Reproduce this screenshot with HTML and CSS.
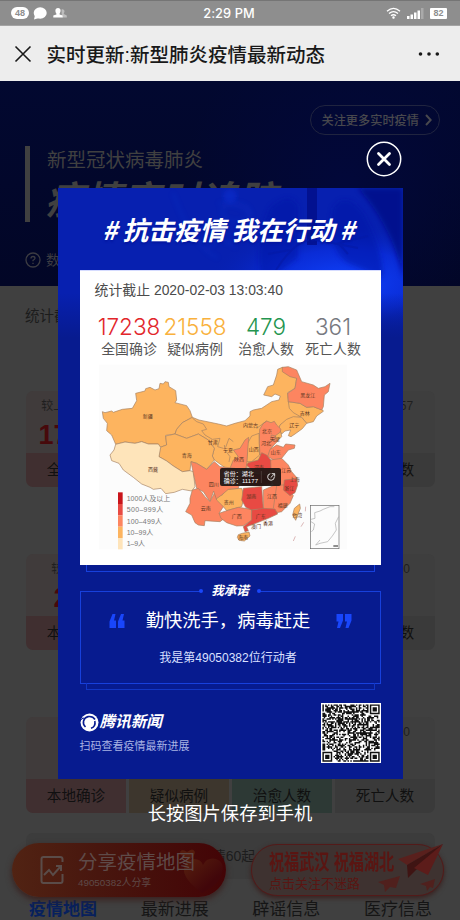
FILE: index.html
```html
<!DOCTYPE html>
<html lang="zh-CN">
<head>
<meta charset="utf-8">
<title>实时更新:新型肺炎疫情最新动态</title>
<link rel="stylesheet" href="styles.css">
</head>
<body>
<div class="phone">
  <div class="status">
    <div class="status-left">
      <span class="pill">48</span>
      <svg width="14" height="13" viewBox="0 0 14 13"><ellipse cx="7.2" cy="6" rx="6.5" ry="5.8" fill="#fff"/><path d="M2 8L1 12.5L6 11z" fill="#fff"/></svg>
      <svg class="people" width="14" height="10" viewBox="0 0 14 10"><path d="M8.500 1.500a2 2 0 0 1 3 1.500c0 1.500-.7 2-.7 3l3 1.500V9.500h-5z" fill="#bdbdbd"/><path d="M5 0c1.700 0 2.600 1.100 2.600 2.600S7 5 6.600 5.600v.8l3 1.200V9.500H.3V7.600l3.100-1.200v-.8C2.800 5 2.400 4 2.400 2.600S3.400 0 5 0z" fill="#fff"/></svg>
    </div>
    <span class="clock">2:29 PM</span>
    <div class="status-right">
      <svg width="15" height="12" viewBox="0 0 15 12" fill="none" stroke="#fff" stroke-width="1.300"><path d="M1 4.200Q7.500-1.500 14 4.200M3 6.600Q7.500 2.600 12 6.600M5 8.800Q7.500 6.600 10 8.800"/><circle cx="7.500" cy="10.600" r=".6" fill="#fff"/></svg>
      <svg width="17" height="11" viewBox="0 0 17 11" fill="#fff"><path d="M0 8h2.500v3H0zM3.500 6.500H6V11H3.500zM7 4.500h2.500V11H7zM10.500 2.500H13V11h-2.500z"/><path d="M14 0h2.500v11H14z" opacity=".25"/></svg>
      <span class="battery">82</span>
    </div>
  </div>
  <div class="nav">
    <svg width="18" height="18" viewBox="0 0 18 18" stroke="#191919" stroke-width="1.600" fill="none"><path d="M1.500 1.500l15 15M16.500 1.500l-15 15"/></svg>
    <span class="nav-title">实时更新:新型肺炎疫情最新动态</span>
    <svg class="dots" width="22" height="4" viewBox="0 0 22 4"><circle cx="2.500" cy="2" r="1.800"/><circle cx="11" cy="2" r="1.800"/><circle cx="19.300" cy="2" r="1.800"/></svg>
  </div>

  <div class="hero">
    <div class="follow">关注更多实时疫情
      <svg width="7" height="12" viewBox="0 0 7 12" fill="none" stroke="#48484d" stroke-width="2"><path d="M1 1l4.700 5L1 11"/></svg>
    </div>
    <div class="headline">
      <p class="sub">新型冠状病毒肺炎</p>
      <p class="main">疫情实时追踪</p>
    </div>
    <div class="source">
      <svg width="16" height="16" viewBox="0 0 16 16" fill="none" stroke="#3c3c42" stroke-width="1.300"><circle cx="8" cy="8" r="7"/><path d="M6 6.500q0-2 2-2t2 1.800q0 1-2 2v1M8 10.800v1.200"/></svg>
      <span>数据</span>
    </div>
  </div>

  <div class="content">
    <p class="asof">统计截止</p>
    <div class="stats">
      <div class="cell c1"><div class="fig"><small class="wide">较上日+2726</small><b>17238</b></div><span>全国确诊</span></div>
      <div class="cell c2"><div class="fig"></div><span></span></div>
      <div class="cell c3"><div class="fig"></div><span></span></div>
      <div class="cell c4"><div class="fig"><small>较上日+57</small></div><span>死亡人数</span></div>
    </div>
    <div class="stats">
      <div class="cell c1"><div class="fig"><small>较上日+0</small><b>212</b></div><span>本地确诊</span></div>
      <div class="cell c2"><div class="fig"></div><span></span></div>
      <div class="cell c3"><div class="fig"></div><span></span></div>
      <div class="cell c4"><div class="fig"><small>较上日+0</small></div><span>死亡人数</span></div>
    </div>
    <div class="stats">
      <div class="cell c1"><div class="fig"><small>较上日</small></div><span>本地确诊</span></div>
      <div class="cell c2"><div class="fig"></div><span>疑似病例</span></div>
      <div class="cell c3"><div class="fig"></div><span>治愈人数</span></div>
      <div class="cell c4"><div class="fig"><small>较上日+0</small></div><span>死亡人数</span></div>
    </div>
    <div class="notice">情60起</div>
    <div class="tabs"><span class="on">疫情地图</span><span>最新进展</span><span>辟谣信息</span><span>医疗信息</span></div>
  </div>

  <div class="share">
    <svg class="heart" width="52" height="48" viewBox="0 0 52 48"><defs><linearGradient id="hg" x1="0" y1="0" x2="1" y2="1"><stop offset="0" stop-color="#57200e"/><stop offset=".7" stop-color="#41060a"/></linearGradient></defs><path d="M24 47Q5 33 6 23Q7 13 16 13Q23 13 25 19Q29 11 38 13Q47 16 44 27Q42 38 24 47z" fill="url(#hg)"/><path d="M10 15Q2 10 2 6Q4 2 9 6Q15 1 17 6Q17 10 10 15z" fill="#551c0e"/></svg>
    <svg class="chart" width="24" height="28" viewBox="0 0 24 28" fill="none" stroke="#5a4c49" stroke-width="2"><path d="M22.500 6V3Q22.500 1 20 1H3.500Q1.500 1 1.500 3V25Q1.500 27 3.500 27H20.500Q22.500 27 22.500 25V18"/><path d="M4 19l5-5 4 5 8-9M16 10h5v5"/></svg>
    <div class="share-text"><span>分享疫情地图</span><small>49050382人分享</small></div>
  </div>
  <div class="bless">
    <div class="bless-text"><strong>祝福武汉 祝福湖北</strong><span>点击关注不迷路</span></div>
    <svg class="planes" width="66" height="52" viewBox="0 0 66 52"><path d="M65 0L20 15l9 6z" fill="#59201d"/><path d="M65 0L29 21l1 13 8-8z" fill="#3f1413"/><path d="M65 0L36 24l14 7z" fill="#5c1c1a"/><path d="M22 32L0 38l6 3 1 7 5-5 6 1zM57 35L42 40l6 2 1 5 3-4 3 1z" fill="#50201d"/></svg>
  </div>

  <svg class="close" width="36" height="36" viewBox="0 0 36 36" fill="none" stroke="#fff"><circle cx="18" cy="18" r="16.700" stroke-width="1.500"/><path d="M12.500 12.500l11 11M23.500 12.500l-11 11" stroke-width="2.800" stroke-linecap="round"/></svg>

  <div class="poster">
    <svg class="lungs" width="345" height="150" viewBox="0 0 345 150">
      <defs>
        <radialGradient id="glow" cx=".78" cy=".58" r=".4" gradientTransform="translate(.05 .05)"><stop offset="0" stop-color="#1044ff"/><stop offset=".55" stop-color="#0b31e6" stop-opacity=".7"/><stop offset="1" stop-color="#0620b0" stop-opacity="0"/></radialGradient>
        <filter id="soft"><feGaussianBlur stdDeviation="2.500"/></filter>
        <linearGradient id="fade" x1="0" y1="0" x2="0" y2="1"><stop offset="0.700" stop-color="#071b8f" stop-opacity="0"/><stop offset="1" stop-color="#071b8f"/></linearGradient>
      </defs>
      <rect width="345" height="150" fill="#0720b0"/>
      <rect width="345" height="150" fill="url(#glow)"/>
      <path d="M300 0H345V90Q335 40 300 0z" fill="#020a86" opacity=".8" filter="url(#soft)"/>
      <g filter="url(#soft)" fill="#0416a8" opacity=".55"><path d="M212 20Q232 2 240 18V70L205 95Q195 60 212 20zM275 20Q288 2 305 25Q325 60 325 90L290 75Q268 60 275 20z"/></g>
      <path d="M249 0h10v57h-10z" fill="#020c86" opacity=".75"/>
      <path d="M251 52Q235 55 218 82M257 52Q275 55 300 60M278 56L310 48M282 57L290 66M232 62L210 66" stroke="#0419a8" stroke-width="2" fill="none" opacity=".7"/>
      <g fill="none" stroke="#1740dc" stroke-width="1.500" opacity=".3" filter="url(#soft)"><path d="M115 5Q135 60 160 70M160 15q20 0 35 12M150 60q12-14 28 0"/><ellipse cx="178" cy="24" rx="14" ry="9"/></g>
      <circle cx="172" cy="8" r="7" fill="#0c35df" opacity=".4" filter="url(#soft)"/>
      <rect width="345" height="150" fill="url(#fade)"/>
    </svg>
    <h1><i>#</i>抗击疫情 我在行动<i>#</i></h1>
    <div class="report">
      <p class="time">统计截止 2020-02-03 13:03:40</p>
      <div class="totals">
        <div class="t1"><b>17238</b><span>全国确诊</span></div>
        <div class="t2"><b>21558</b><span>疑似病例</span></div>
        <div class="t3"><b>479</b><span>治愈人数</span></div>
        <div class="t4"><b>361</b><span>死亡人数</span></div>
      </div>
      <svg class="map" width="280" height="200" viewBox="0 0 840 600">
        <rect x="12" y="14" width="744" height="554" fill="#fcfcfc"/>
        <g stroke="#a58061" stroke-width="2" stroke-linejoin="round">
          <g fill="#fdb45f">
            <path d="M22 155L30 158 50 153 55 157 82 148 112 145 125 122 122 100 150 93 152 86 165 82 180 90 192 86 195 70 205 72 210 65 220 67 222 80 242 92 245 120 240 128 275 137 285 152 292 172 262 188 245 208 240 222 212 226 215 255 195 262 190 252 160 252 140 245 120 250 90 246 62 253 50 225 35 212 37 190 25 175z"/>
            <path d="M292 172L312 180 370 192 395 198 420 190 450 182 465 168 465 155 475 150 500 145 530 125 552 120 556 108 540 102 530 110 506 105 518 80 535 75 545 45 548 28 562 22 580 35 605 55 600 85 578 98 580 125 600 150 620 170 590 175 555 195 560 230 470 320 400 330 358 300 352 288 358 265 340 240 310 222 275 235 240 222 245 208 262 188z"/>
            <path d="M195 262L215 255 212 228 240 222 275 235 310 222 340 240 358 265 352 288 358 300 335 328 305 310 288 305 285 332 262 335 235 318 215 303 192 290z"/>
            <path d="M580 125L615 130 635 142 655 140 683 150 685 154 665 168 655 185 635 190 620 172 595 158 583 145z"/>
            <path d="M575 178L595 170 620 172 635 190 622 206 600 222 588 230 580 227 587 210 570 213 560 222 552 205 555 195z"/>
            <path d="M458 250L470 228 492 220 494 285 470 305 455 305 457 270z"/>
            <path d="M362 418L367 405 382 405 390 388 440 385 448 410 440 440 395 452 385 440 365 435z"/>
            <path d="M430 524L442 520 462 516 465 528 448 543 432 541 427 532zM614 432L616 445 602 481 593 465 598 445z"/>
          </g>
          <path fill="#fee4ba" d="M62 253L90 246 120 250 140 245 160 252 190 252 197 262 192 290 215 303 235 318 262 335 285 332 295 335 300 380 290 393 262 388 238 397 212 401 198 385 175 388 165 382 140 372 115 352 85 330 72 310 50 302 45 285 57 270z"/>
          <g fill="#fd8560">
            <path d="M562 22L580 20 605 30 620 65 655 75 670 85 690 80 705 70 700 95 688 105 685 140 680 150 655 140 635 142 615 130 580 125 578 100 600 85 605 55 585 50 562 35z"/>
            <path d="M494 208L505 190 515 183 528 188 538 184 545 195 558 208 555 217 540 228 548 243 530 262 518 290 495 285 493 250z"/>
            <path d="M450 240L461 232 455 315 450 335 405 325 415 300 430 290 415 270 435 265z"/>
            <path d="M518 290L525 268 545 255 565 262 572 252 600 255 598 265 580 270 560 295 540 302z"/>
            <path d="M525 300L560 295 580 315 590 335 607 355 580 362 570 378 540 378 515 345z"/>
            <path d="M505 390L540 375 572 375 585 395 595 407 585 430 560 455 545 458 505 450z"/>
            <path d="M288 305L305 310 335 328 358 305 375 320 420 325 440 345 430 385 400 388 380 405 362 418 356 393 345 425 325 395 305 385 295 340z"/>
            <path d="M292 390L310 385 330 410 345 425 358 400 365 420 385 440 372 460 395 470 375 485 330 482 328 497 310 495 300 488 290 465 272 455 285 430 285 415z"/>
            <path d="M372 460L395 452 430 442 470 448 472 480 445 497 425 498 395 488 378 475z"/>
          </g>
          <g fill="#e84a43">
            <path d="M460 308L490 300 500 278 515 285 527 300 528 325 515 350 475 335 455 315z"/>
            <path d="M438 335L520 345 530 372 500 378 440 376z" fill="#c9151b"/>
            <path d="M568 360L605 356 608 375 600 398 585 407 565 390z"/>
            <path d="M445 385L500 380 505 448 470 450 452 442 440 420z"/>
            <path d="M470 450L505 445 540 447 548 462 520 475 482 490 455 500 460 512 450 515 445 500 470 480z"/>
          </g>
          <path d="M388 255L390 270 405 290 402 306M392 262L402 235 415 245M292 174L305 185 325 192 335 208 320 212 330 225 352 238 375 235 368 260 385 265M545 378L540 410 535 445M529 225l12 3-2 15-12-3zM485 205L515 183" fill="none"/>
        </g>
        <g class="labels">
          <text x="143" y="175">新疆</text><text x="260" y="291">青海</text><text x="159" y="334">西藏</text><text x="338" y="252">甘肃</text><text x="384" y="275">宁夏</text><text x="341" y="377">四川</text><text x="317" y="451">云南</text><text x="386" y="431">贵州</text><text x="410" y="475">广西</text><text x="482" y="473">广东</text><text x="454" y="413">湖南</text><text x="516" y="413">江西</text><text x="548" y="441">福建</text><text x="568" y="391">浙江</text><text x="559" y="336">江苏</text><text x="584" y="363">上海</text><text x="476" y="327">河南</text><text x="417" y="302">陕西</text><text x="461" y="273">山西</text><text x="498" y="256">河北</text><text x="527" y="282">山东</text><text x="501" y="218">北京</text><text x="525" y="243">天津</text><text x="444" y="201">内蒙古</text><text x="583" y="200">辽宁</text><text x="614" y="165">吉林</text><text x="616" y="110">黑龙江</text><text x="468" y="505">澳门</text><text x="504" y="494">香港</text><text x="429" y="538">海南</text><text x="592" y="471">台湾</text>
        </g>
        <g fill="none" stroke="#dcb8b8" stroke-width="3"><path d="M595 543l6-14M618 500l8-13M631 454l1-14"/></g>
        <g fill="none" stroke="#666" stroke-width="2"><rect x="646" y="436" width="86" height="130"/><path d="M648 478L660 475 659 458 675 453 685 448 705 440 718 440M648 485L659 492 655 510 649 515M731 470L721 490 724 510 712 528 698 545 675 550 662 555 675 540" stroke="#aaa"/><path d="M715 558h14" stroke-width="5" stroke="#777"/></g>
        <rect x="375" y="324" width="183" height="54" rx="6" fill="#201715" opacity=".94"/>
        <path d="M499 333v36" stroke="#594c48" stroke-width="2"/>
        <g class="tip"><text x="386" y="348" textLength="90">省份：湖北</text><text x="386" y="369" textLength="103">确诊：11177</text></g>
        <path d="M526 341A10 10 0 1 0 538 351M527 353L538 342M530 341h9v9" fill="none" stroke="#fff" stroke-width="2.500"/>
        <path d="M69 397h14v35H69z" fill="#c9151b"/><path d="M69 432h14v34H69z" fill="#e84a43"/><path d="M69 466h14v34H69z" fill="#fd8560"/><path d="M69 500h14v34H69z" fill="#fdb45f"/><path d="M69 534h14v34H69z" fill="#fee4ba"/>
        <g class="legend"><text x="95" y="423" textLength="131">1000人及以上</text><text x="95" y="457" textLength="110">500–999人</text><text x="95" y="491" textLength="106">100–499人</text><text x="95" y="525" textLength="80">10–99人</text><text x="95" y="559" textLength="55">1–9人</text></g>
      </svg>
    </div>
    <div class="lip"></div>
    <div class="pledge">
      <div class="pledge-head"><span class="line left"></span><em>我承诺</em><span class="line right"></span></div>
      <div class="pledge-box">
        <div class="pledge-row">
          <svg width="16" height="14" viewBox="0 0 16 14" fill="#1946fb"><path d="M6.500 0L5 6.500H7V14H.5V7.500L3.500 0zM15 0L13.500 6.500H15.500V14H9V7.500L12 0z"/></svg>
          <span>勤快洗手，病毒赶走</span>
          <svg width="16" height="14" viewBox="0 0 16 14" fill="#1946fb"><path d="M.5 0H7V6.500L4 14H1L2.500 7.500H.5zM9 0H15.500V6.500L12.500 14H9.500L11 7.500H9z"/></svg>
        </div>
        <p>我是第49050382位行动者</p>
      </div>
    </div>
    <div class="lip low"></div>
    <div class="foot">
      <div>
        <div class="brand">
          <svg width="19" height="19" viewBox="0 0 19 19"><circle cx="9.500" cy="9.500" r="9" fill="#fff"/><path d="M5.500 14A6 6 0 0 1 8 3.600Q13 3 15 6.500M14.800 8Q16 13.500 11 15.300" fill="none" stroke="#071b8f" stroke-width="1.600"/><path d="M7 12.500Q6.500 6.500 10 6.500T13 12.500z" fill="#fff"/><path d="M0 8Q2 5 4 5" stroke="#071b8f" fill="none"/></svg>
          <em>腾讯新闻</em>
        </div>
        <p>扫码查看疫情最新进展</p>
      </div>
      <svg class="qr" id="qr" width="60" height="60" viewBox="-1 -1 43 43"></svg>
    </div>
  </div>
  <p class="hint">长按图片保存到手机</p>
</div>
<script src="script.js"></script>
</body>
</html>
```
FILE: styles.css
```css
* { box-sizing: border-box; }
body, p, h1 { margin: 0; }
body { background: #404040; font-family: "Liberation Sans", "Noto Sans CJK SC", sans-serif; }
svg { display: block; flex: none; }
.phone { position: relative; width: 460px; height: 920px; overflow: hidden; background: #404040; }

.status { height: 26px; background: #8e8e8e; display: grid; grid-template-columns: 1fr auto 1fr; align-items: center; padding: 0 13px 0 11px; color: #fff; border-bottom: 1px solid #a4a4a4; border-top: 1px solid #757575; }
.status-left, .status-right { display: flex; align-items: center; gap: 4px; }
.status-right { justify-content: flex-end; gap: 6px; }
.pill { width: 18px; height: 12px; border-radius: 6px; background: #fff; color: #8e8e8e; font: bold 9px/12px "Liberation Sans", sans-serif; text-align: center; }
.people { margin-left: 2px; }
.clock { font-family: Inter, sans-serif; font-weight: 500; font-size: 12.800px; letter-spacing: .1px; }
.battery { width: 17px; height: 11px; border-radius: 1px; background: #fff; color: #8e8e8e; font: bold 9px/11px "Liberation Sans", sans-serif; text-align: center; }

.nav { height: 55px; background: #ededed; display: flex; align-items: center; padding: 0 20px 0 14px; }
.nav-title { margin-left: 14.500px; flex: 1; font-size: 19.500px; font-weight: 500; color: #191919; white-space: nowrap; }
.dots { fill: #191919; }

.hero { height: 205px; background: radial-gradient(circle at 75% 50%, #02083a, transparent 45%), linear-gradient(#020830, #020626); padding: 24px 20px 0 25px; color: #48484d; }
.follow { margin-left: auto; width: 130px; height: 30px; border: 1px solid #20243f; border-radius: 15px; display: flex; align-items: center; justify-content: flex-end; gap: 6px; padding-right: 7px; font-size: 12.200px; font-weight: 500; white-space: nowrap; }
.headline { height: 76px; margin-top: 11px; border-left: 5px solid #404040; padding-left: 17px; color: #404040; white-space: nowrap; }
.headline .sub { font-size: 19.500px; line-height: 28px; }
.headline .main { font-size: 38.500px; line-height: 48px; font-weight: bold; font-style: italic; margin-top: 3px; margin-left: -2px; }
.source { display: flex; align-items: center; gap: 5px; margin-top: 27px; font-size: 14px; color: #3c3c42; line-height: 22px; }

.content { padding: 18px 25px 0 26px; }
.asof { font-size: 14.500px; line-height: 24px; color: #1c1c1c; margin: 0 0 63px -1px; }
.stats { display: grid; grid-template-columns: repeat(4, 1fr); gap: 3px; height: 96px; border-radius: 7px; overflow: hidden; margin-bottom: 67px; }
.cell { display: flex; flex-direction: column; min-width: 0; white-space: nowrap; text-align: center; }
.fig { height: 62px; padding-top: 5px; display: flex; flex-direction: column; align-items: center; background: #3e3e3e; }
.fig small { font-size: 12px; line-height: 20px; color: #1f1f1f; }
.fig b { font-size: 27px; line-height: 38px; color: #47090b; }
.cell > span { height: 34px; line-height: 34px; font-size: 14.600px; color: #101010; background: #3a3a3a; }
.c1 .fig { background: #403b3b; }
.c1 > span { background: #402f30; }
.c2 > span { background: #3d362d; }
.c3 > span { background: #2d3935; }
.notice { margin-top: -47px; height: 46px; background: #3c3c3c; border-radius: 7px; color: #1d1d1d; font-size: 14px; line-height: 46px; text-align: center; padding-left: 6px; }
.tabs { display: flex; justify-content: space-between; margin-top: 19px; padding: 0 3px; line-height: 24px; font-size: 17px; color: #151515; }
.tabs .on { color: #07205d; font-weight: bold; }

.share { position: absolute; left: 12px; top: 843px; width: 214px; height: 54px; border-radius: 27px; background: linear-gradient(90deg, #512313, #48160e 40%, #430406); display: flex; align-items: center; padding-left: 28px; gap: 14px; box-shadow: 0 3px 6px #39201e; color: #5e4a48; overflow: hidden; }
.heart { position: absolute; left: 166px; top: 3px; }
.chart { position: relative; }
.share-text { position: relative; display: flex; flex-direction: column; white-space: nowrap; }
.share-text span { font-size: 19.500px; line-height: 25px; }
.share-text small { font-size: 9.800px; line-height: 16px; }
.bless { position: absolute; left: 251px; top: 844px; width: 193px; height: 52px; border-radius: 26px; border: 1.500px solid #531a19; background: #3e3230; padding-left: 17px; color: #5a1512; box-shadow: 0 2px 5px #39201e; }
.bless-text { display: flex; flex-direction: column; white-space: nowrap; }
.bless-text strong { font-size: 21px; line-height: 30px; height: 30px; transform: scaleX(.72); transform-origin: left; margin-top: 2px; }
.bless-text span { font-size: 13px; line-height: 13px; }
.planes { position: absolute; right: -1px; top: -1px; }

.close { position: absolute; left: 366px; top: 141px; }
.poster { position: absolute; left: 57.500px; top: 188px; width: 345px; height: 591px; background: #071b8f; padding: 0 22px; color: #fff; }
.lungs { position: absolute; left: 0; top: 0; }
.poster h1 { position: relative; height: 82px; line-height: 82px; font-size: 25.800px; font-style: italic; font-weight: bold; white-space: nowrap; display: flex; justify-content: center; gap: 5px; text-shadow: 0 2px 2px #0417a0; font-family: "Noto Sans CJK SC", sans-serif; margin-left: -3px; }
.report { position: relative; height: 295px; background: #fff; border-top: 1px solid #d6dcff; }
.time { padding: 7px 0 0 15px; font-size: 13.900px; line-height: 24px; color: #4b4b4b; white-space: nowrap; }
.totals { display: grid; grid-template-columns: 66px 66px 76px 58px; padding-left: 16.500px; margin-top: 12px; color: #555; white-space: nowrap; }
.totals div { display: flex; flex-direction: column; align-items: center; }
.totals b { font: 300 22.500px/26px Inter, sans-serif; letter-spacing: 0; }
.totals span { font-size: 13.900px; line-height: 18px; }
.t1 b { color: #e2262b; } .t2 b { color: #f9b13c; } .t3 b { color: #24954f; } .t4 b { color: #777980; }
.map { margin: 2px 0 0 15.500px; }
.labels { font-size: 15px; fill: #5b351f; }
.tip { font-size: 18px; fill: #fff; }
.legend { font-size: 21px; fill: #777; }
.lip { height: 7px; margin: 0 6px; border: 1px solid #1740dc; border-top: 0; }
.lip.low { border-color: #1236c4; }
.pledge { height: 102px; margin-top: 9px; }
.pledge-head { position: relative; height: 20px; display: flex; align-items: center; justify-content: space-between; }
.pledge-head em { font-size: 12.500px; font-weight: bold; line-height: 20px; }
.pledge-box { height: 93px; margin-top: -10px; padding-top: 15px; border: 1px solid #1740dc; border-top: 0; }
.line { width: 121px; height: 1px; background: #1740dc; position: relative; }
.line::after { content: ""; position: absolute; width: 4px; height: 4px; border-radius: 50%; background: #1946fb; top: -1.500px; right: -2px; }
.line.right::after { right: auto; left: -2px; }
.pledge-row { display: flex; align-items: center; justify-content: space-between; padding: 0 28px; font-size: 18.300px; line-height: 30px; white-space: nowrap; }
.pledge-row span { margin-left: -4px; }
.pledge p { margin-top: 12px; margin-left: -4px; font-size: 12px; line-height: 20px; text-align: center; color: #dbe0ff; }
.foot { display: flex; justify-content: space-between; margin-top: 13px; }
.brand { display: flex; align-items: center; gap: 1px; margin-top: 9px; height: 20px; white-space: nowrap; }
.brand em { font-size: 15.600px; font-weight: bold; line-height: 20px; }
.foot p { font-size: 11px; line-height: 18px; margin-top: 5px; color: #a9b3e4; }
.hint { position: absolute; left: 0; right: 0; top: 801px; text-align: center; color: #fff; font-size: 18.300px; line-height: 26px; }
```
FILE: script.js
```js
// Draws the square code: three finder marks plus data modules.
const size = 41;
const finders = [[34, 0], [0, 34], [34, 34]];
let seed = 20203;
const next = () => (seed = (seed * 1103515245 + 12345) % 2147483648) / 2147483648;
let path = "";
for (let y = 0; y < size; y++) {
  for (let x = 0; x < size; x++) {
    let dark = next() > 0.46;
    for (const [fx, fy] of finders) {
      const dx = Math.abs(x - fx - 3), dy = Math.abs(y - fy - 3), d = Math.max(dx, dy);
      if (d <= 4) dark = d === 3 || d < 2;
    }
    if (dark) path += `M${x} ${y}h1.05v1.05h-1.05z`;
  }
}
document.getElementById("qr").innerHTML =
  `<rect x="-1" y="-1" width="43" height="43" fill="#fff"/><path d="${path}" fill="#111"/>`;
```
